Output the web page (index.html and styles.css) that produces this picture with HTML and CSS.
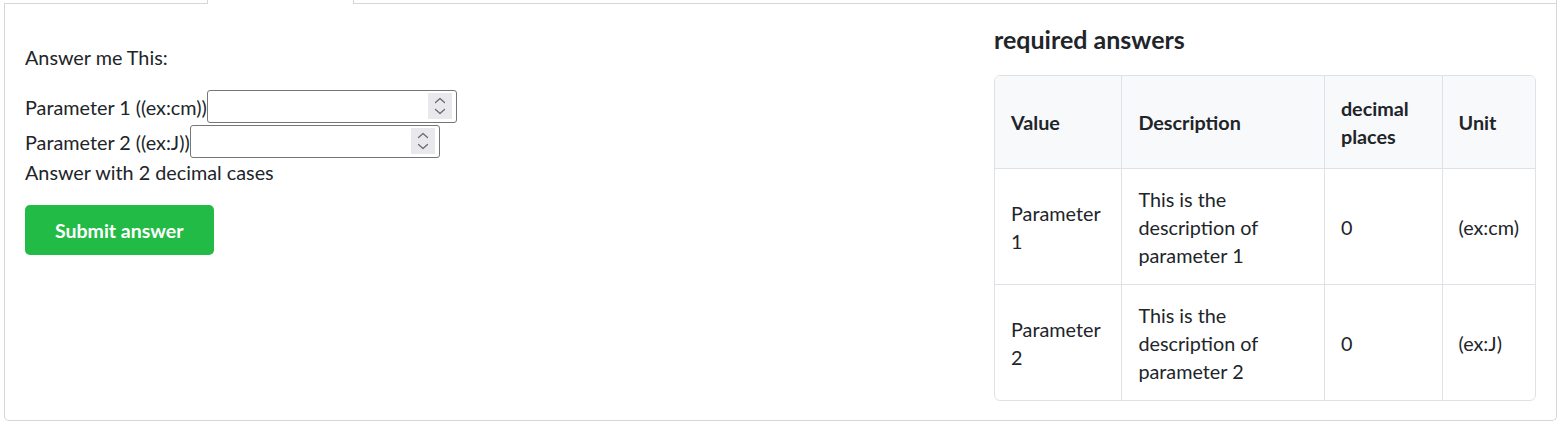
FILE: index.html
```html
<!DOCTYPE html>
<html lang="en">
<head>
<meta charset="utf-8">
<title>Question</title>
<link rel="stylesheet" href="styles.css">
</head>
<body>
<div class="tabs">
  <div class="tab tab-left"></div>
  <div class="tab tab-active"></div>
  <div class="tab tab-rest"></div>
</div>
<div class="panel">
  <div class="question">
    <p class="prompt">Answer me This:</p>
    <div class="field">
      <label for="p1">Parameter 1 ((ex:cm))</label>
      <span class="num-wrap"><input id="p1" class="num" type="number"><span class="spin" aria-hidden="true"><svg width="24" height="26" viewBox="0 0 24 26"><path d="M7.5 9.5 L12 5.5 L16.5 9.5 M7.5 16.5 L12 20.5 L16.5 16.5" fill="none" stroke="#6a6a70" stroke-width="1.3" stroke-linecap="round" stroke-linejoin="round"/></svg></span></span>
    </div>
    <div class="field">
      <label for="p2">Parameter 2 ((ex:J))</label>
      <span class="num-wrap"><input id="p2" class="num" type="number"><span class="spin" aria-hidden="true"><svg width="24" height="26" viewBox="0 0 24 26"><path d="M7.5 9.5 L12 5.5 L16.5 9.5 M7.5 16.5 L12 20.5 L16.5 16.5" fill="none" stroke="#6a6a70" stroke-width="1.3" stroke-linecap="round" stroke-linejoin="round"/></svg></span></span>
    </div>
    <p class="hint">Answer with 2 decimal cases</p>
    <button class="submit" type="button">Submit answer</button>
  </div>
  <div class="answers">
    <h2 class="answers-title">required answers</h2>
    <div class="table-wrap">
      <table class="req-table">
        <colgroup>
          <col class="c1"><col class="c2"><col class="c3"><col class="c4">
        </colgroup>
        <thead>
          <tr><th>Value</th><th>Description</th><th>decimal places</th><th>Unit</th></tr>
        </thead>
        <tbody>
          <tr><td>Parameter 1</td><td>This is the description of parameter 1</td><td>0</td><td>(ex:cm)</td></tr>
          <tr><td>Parameter 2</td><td>This is the description of parameter 2</td><td>0</td><td>(ex:J)</td></tr>
        </tbody>
      </table>
    </div>
  </div>
</div>
</body>
</html>
```

FILE: styles.css
```css
* { box-sizing: border-box; }
html, body { margin: 0; padding: 0; background: #fff; }
body {
  font-family: Lato, "Open Sans", Arial, sans-serif;
  font-size: 19.8px;
  color: #212529;
  padding-left: 4px;
}
.tabs { display: flex; height: 4px; }
.tab { height: 4px; }
.tab-left { width: 204px; border-bottom: 1px solid #d6d6d6; border-right: 1px solid #d6d6d6; }
.tab-active { width: 146px; border-right: 1px solid #d6d6d6; }
.tab-rest { flex: 1; border-bottom: 1px solid #d6d6d6; border-right: 1px solid #d6d6d6; }
.panel {
  display: grid;
  grid-template-columns: 1fr 542px;
  border: 1px solid #d6d6d6;
  border-top: none;
  border-radius: 0 0 5px 5px;
  padding: 20px;
  height: 417px;
}
.prompt { margin: 21px 0 21px; line-height: 24px; }
.field { display: flex; align-items: center; height: 33px; margin-bottom: 2px; }
.field label { line-height: 24px; }
.num-wrap { position: relative; display: inline-block; height: 33px; }
.num {
  width: 250px; height: 33px;
  border: 1px solid #767676; border-radius: 3px;
  font: inherit; padding: 2px 6px;
  -moz-appearance: textfield;
}
.num::-webkit-inner-spin-button,
.num::-webkit-outer-spin-button { -webkit-appearance: none; margin: 0; }
.spin {
  position: absolute; right: 5px; top: 3px;
  width: 24px; height: 26px; background: #e9e9ed; border-radius: 1px;
  pointer-events: none;
}
.spin svg { display: block; }
.hint { margin: 0 0 21px; line-height: 24px; }
.submit {
  font-family: inherit; font-weight: 700; font-size: 19.5px;
  color: #fff; background: #22bb45; border: none; border-radius: 5px;
  height: 50px; padding: 0 30px; cursor: pointer;
}
.answers-title { font-size: 25px; font-weight: 700; margin: 0 0 21px; line-height: 30px; }
.table-wrap { border: 1px solid #dee2e6; border-radius: 6px; overflow: hidden; }
.req-table { border-collapse: collapse; width: 100%; line-height: 28px; }
.req-table th, .req-table td {
  text-align: left; vertical-align: middle;
  border-right: 1px solid #dee2e6; border-bottom: 1px solid #dee2e6;
}
.req-table th:last-child, .req-table td:last-child { border-right: none; }
.req-table tbody tr:last-child td { border-bottom: none; }
.req-table th { background: #f8f9fa; font-weight: 700; padding: 18px 16px; }
.req-table td { padding: 15.5px 16px; }
.c1 { width: 127px; } .c2 { width: 204px; } .c3 { width: 118px; } .c4 { width: 92px; }
```
